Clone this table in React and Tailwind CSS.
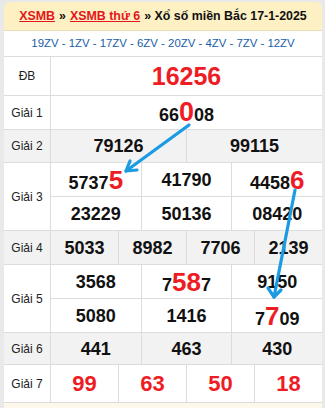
import React from "react";

const RED = "text-[#ee1c25]";

function Big({ children, size = "text-[27px]" }) {
  return <span className={`${RED} ${size}`}>{children}</span>;
}

function Row({ label, h, gray, children }) {
  return (
    <div className={`flex border-b border-[#dcdcdc] ${h} ${gray ? "bg-[#f2f2f2]" : "bg-white"}`}>
      <div className="w-[46px] shrink-0 flex items-center justify-center text-[12px] text-[#222]">
        {label}
      </div>
      <div className="flex-1 flex flex-col border-l border-[#dcdcdc]">{children}</div>
    </div>
  );
}

function Cells({ items, cls = "text-[18px] text-[#111]", last }) {
  return (
    <div className={`flex flex-1 ${last ? "" : "border-b border-[#dcdcdc]"}`}>
      {items.map((it, i) => (
        <div
          key={i}
          className={`flex-1 flex items-center justify-center font-bold leading-none ${cls} ${
            i > 0 ? "border-l border-[#dcdcdc]" : ""
          }`}
        >
          {it}
        </div>
      ))}
    </div>
  );
}

export default function App() {
  return (
    <div className="relative w-[325px] h-[408px] overflow-hidden bg-[#e9e9e9] pl-[4px] pr-[3px] pt-[2px] font-['Liberation_Sans',Arial,sans-serif]">
      <div className="rounded-t-[6px] overflow-hidden">
        {/* Title */}
        <div className="h-[29px] bg-[#fdf0c2] flex items-center justify-center text-[12.4px] font-bold text-[#111] border-b border-[#e6dcb5]">
          <a className="text-[#e3161d] underline">XSMB</a>
          <span className="mx-[4px]">»</span>
          <a className="text-[#e3161d] underline">XSMB thứ 6</a>
          <span className="ml-[4px]">» Xổ số miền Bắc 17-1-2025</span>
        </div>
        {/* Codes */}
        <div className="h-[26px] bg-white flex items-center justify-center text-[11.4px] text-[#175ea8] border-b border-[#dcdcdc]">
          19ZV - 1ZV - 17ZV - 6ZV - 20ZV - 4ZV - 7ZV - 12ZV
        </div>

        <Row label="ĐB" h="h-[39px]">
          <Cells items={["16256"]} cls={`text-[25px] ${RED}`} last />
        </Row>
        <Row label="Giải 1" h="h-[34px]">
          <Cells
            items={[
              <span>
                66<Big>0</Big>08
              </span>,
            ]}
            last
          />
        </Row>
        <Row label="Giải 2" h="h-[33px]" gray>
          <Cells items={["79126", "99115"]} last />
        </Row>
        <Row label="Giải 3" h="h-[68px]">
          <Cells
            items={[
              <span>
                5737<Big size="text-[26px]">5</Big>
              </span>,
              "41790",
              <span>
                4458<Big size="text-[26px]">6</Big>
              </span>,
            ]}
          />
          <Cells items={["23229", "50136", "08420"]} last />
        </Row>
        <Row label="Giải 4" h="h-[34px]" gray>
          <Cells items={["5033", "8982", "7706", "2139"]} last />
        </Row>
        <Row label="Giải 5" h="h-[68px]">
          <Cells
            items={[
              "3568",
              <span>
                7<Big size="text-[26px]">58</Big>7
              </span>,
              "9150",
            ]}
          />
          <Cells
            items={[
              "5080",
              "1416",
              <span>
                7<Big size="text-[26px]">7</Big>09
              </span>,
            ]}
            last
          />
        </Row>
        <Row label="Giải 6" h="h-[32px]" gray>
          <Cells items={["441", "463", "430"]} last />
        </Row>
        <Row label="Giải 7" h="h-[38px]">
          <Cells items={["99", "63", "50", "18"]} cls={`text-[22px] ${RED}`} last />
        </Row>
        <div className="h-[10px] bg-[#fdf8e9]" />
      </div>

      {/* arrows */}
      <svg
        className="absolute inset-0 pointer-events-none"
        width="325"
        height="408"
        viewBox="0 0 325 408"
      >
        <g stroke="#1b9be3" strokeWidth="3.2" fill="none" strokeLinecap="round" strokeLinejoin="round">
          <path d="M189 125 L126 171" />
          <path d="M126 171 L137 170 M126 171 L130 161" />
          <path d="M295 190 L274 297" />
          <path d="M274 297 L268 288 M274 297 L281 290" />
        </g>
      </svg>
    </div>
  );
}
